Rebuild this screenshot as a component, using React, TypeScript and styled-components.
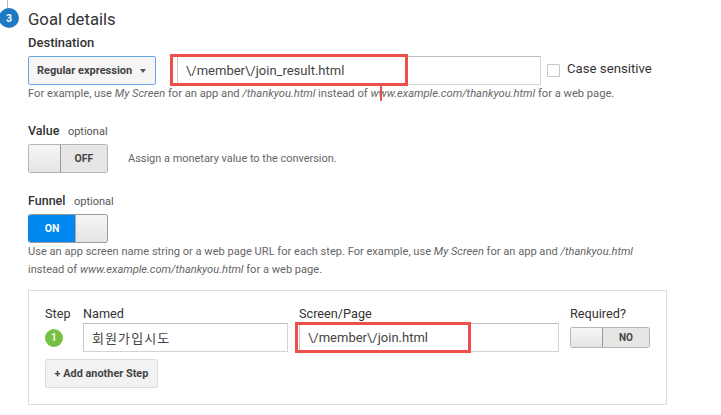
import React from "react";
import styled, { createGlobalStyle } from "styled-components";

const Global = createGlobalStyle`
  html, body { margin: 0; padding: 0; background: #fff; overflow: hidden; }
  body { font-family: Roboto, "Noto Sans CJK KR", sans-serif; color: #333; }
`;

const Page = styled.div`
  position: relative;
  width: 721px;
  height: 415px;
  padding: 9px 0 0 28px;
  box-sizing: border-box;
  overflow: hidden;
`;
const Rail = styled.div`
  position: absolute;
  left: 7px;
  top: 0;
  width: 1px;
  height: 9px;
  background: #bbb;
`;
const Badge = styled.div`
  position: absolute;
  left: -1px;
  top: 8px;
  width: 20px;
  height: 20px;
  border-radius: 50%;
  background: #1f7ac4;
  color: #fff;
  font-size: 10px;
  font-weight: 700;
  display: flex;
  align-items: center;
  justify-content: center;
`;
const Title = styled.h2`
  margin: 0;
  font-size: 16.7px;
  line-height: 21px;
  font-weight: 400;
  color: #333;
`;
const Label = styled.div<{ $mt?: number; $size?: number }>`
  margin-top: ${(p) => p.$mt ?? 0}px;
  height: 16px;
  font-size: ${(p) => p.$size ?? 12.5}px;
  line-height: 16px;
  font-weight: 500;
  color: #333;
  display: flex;
  gap: 8.5px;
  align-items: baseline;
`;
const Optional = styled.span`
  font-size: 11px;
  font-weight: 400;
  color: #555;
`;
const DestRow = styled.div`
  display: flex;
  align-items: center;
  margin-top: 5px;
`;
const Select = styled.div`
  width: 128px;
  height: 29px;
  box-sizing: border-box;
  border: 1px solid #6aa5e8;
  border-radius: 2px;
  background: #f5f5f5;
  display: flex;
  align-items: center;
  padding-left: 8px;
  gap: 8px;
  font-size: 11px;
  font-weight: 700;
  color: #444;
`;
const Caret = styled.span`
  width: 0;
  height: 0;
  border-left: 3.5px solid transparent;
  border-right: 3.5px solid transparent;
  border-top: 4px solid #555;
`;
const Field = styled.div<{ $w: number; $ml?: number }>`
  position: relative;
  box-sizing: border-box;
  width: ${(p) => p.$w}px;
  height: 29px;
  margin-left: ${(p) => p.$ml ?? 0}px;
  border: 1px solid #d4d4d4;
  border-top-color: #bdbdbd;
  border-left-color: #c8c8c8;
  background: #fff;
  padding-left: 8px;
  display: flex;
  align-items: center;
  font-size: 13px;
  color: #444;
`;
const RedBox = styled.div<{ $l: number; $w: number; $t: number; $h: number }>`
  position: absolute;
  left: ${(p) => p.$l}px;
  top: ${(p) => p.$t}px;
  width: ${(p) => p.$w}px;
  height: ${(p) => p.$h}px;
  box-sizing: border-box;
  border: 3px solid #ee4f4b;
  pointer-events: none;
`;
const RedTick = styled.div`
  position: absolute;
  left: 380px;
  top: 86px;
  width: 2px;
  height: 15px;
  background: #e2524e;
`;
const Check = styled.span`
  width: 13px;
  height: 13px;
  box-sizing: border-box;
  margin: 0 7px 0 6px;
  border: 1px solid #c6c6c6;
  border-radius: 1px;
  background: #fff;
`;
const CheckText = styled.span`
  font-size: 13.2px;
  color: #333;
  position: relative;
  top: -2px;
`;
const Hint = styled.p<{ $size?: number }>`
  margin: 0;
  height: auto;
  font-size: ${(p) => p.$size ?? 11}px;
  line-height: 18px;
  color: #666;
  white-space: nowrap;
  em { font-style: italic; }
`;
const ToggleRow = styled.div`
  display: flex;
  align-items: center;
  margin-top: 5px;
  gap: 20px;
`;
const ToggleWrap = styled.div<{ $h: number; $on?: boolean }>`
  display: flex;
  width: 80px;
  height: ${(p) => p.$h}px;
  box-sizing: border-box;
  border: 1px solid ${(p) => (p.$on ? "#9a9a9a" : "#b5b5b5")};
  border-left-color: ${(p) => (p.$on ? "#1a85dd" : "#a9b9c9")};
  border-radius: 3px;
  overflow: hidden;
`;
const Knob = styled.span`
  flex: 0 0 auto;
  width: 32px;
  background: linear-gradient(#f6f6f6, #e4e4e4);
  box-sizing: border-box;
`;
const KnobLeft = styled(Knob)`
  border-right: 1px solid #999;
`;
const KnobRight = styled(Knob)`
  border-left: 1px solid #aaa;
`;
const Track = styled.span<{ $on?: boolean; $size?: number }>`
  flex: 1;
  display: flex;
  align-items: center;
  justify-content: center;
  font-size: ${(p) => p.$size ?? 10.5}px;
  font-weight: 700;
  color: ${(p) => (p.$on ? "#fff" : "#444")};
  background: ${(p) => (p.$on ? "#0088f0" : "#e6e6e6")};
`;
const ToggleNote = styled.span`
  font-size: 10.95px;
  color: #666;
`;
const Panel = styled.div`
  box-sizing: border-box;
  width: 639px;
  height: 115px;
  margin-top: 11px;
  border: 1px solid #ddd;
  padding: 15px 16px 0;
`;
const StepGrid = styled.div`
  display: grid;
  grid-template-columns: 38px 205px 11px 260px 11px 80px;
  grid-template-rows: 16px 29px;
  row-gap: 1px;
  font-size: 12.7px;
  color: #333;
  line-height: 16px;
`;
const Gap = styled.span``;
const StepDot = styled.div`
  width: 18px;
  height: 18px;
  border-radius: 50%;
  background: #77c043;
  color: #fff;
  font-size: 11px;
  font-weight: 500;
  display: flex;
  align-items: center;
  justify-content: center;
  align-self: center;
`;
const ToggleCell = styled.div`
  align-self: center;
`;
const KoreanText = styled.span`
  font-family: "Noto Sans CJK KR", sans-serif;
  font-size: 13px;
  font-weight: 400;
  letter-spacing: 1.1px;
  color: #444;
`;
const AddButton = styled.div`
  box-sizing: border-box;
  width: 113px;
  height: 29px;
  margin-top: 7px;
  border: 1px solid #ddd;
  border-radius: 2px;
  background: #f2f2f2;
  display: flex;
  align-items: center;
  justify-content: center;
  font-size: 10.9px;
  font-weight: 700;
  color: #444;
`;

export default function App() {
  return (
    <Page>
      <Global />
      <Rail />
      <Badge>3</Badge>
      <Title>Goal details</Title>
      <Label $mt={5} $size={13}>Destination</Label>
      <DestRow>
        <Select>
          Regular expression
          <Caret />
        </Select>
        <Field $w={364} $ml={21}>
          \/member\/join_result.html
          <RedBox $l={-8} $w={238} $t={-3} $h={32} />
        </Field>
        <Check />
        <CheckText>Case sensitive</CheckText>
      </DestRow>
      <RedTick />
      <Hint $size={11.17}>
        For example, use <em>My Screen</em> for an app and <em>/thankyou.html</em> instead of{" "}
        <em>www.example.com/thankyou.html</em> for a web page.
      </Hint>
      <Label $mt={20}>
        Value <Optional>optional</Optional>
      </Label>
      <ToggleRow>
        <ToggleWrap $h={29}>
          <KnobLeft />
          <Track>OFF</Track>
        </ToggleWrap>
        <ToggleNote>Assign a monetary value to the conversion.</ToggleNote>
      </ToggleRow>
      <Label $mt={20}>
        Funnel <Optional>optional</Optional>
      </Label>
      <ToggleRow>
        <ToggleWrap $h={29} $on>
          <Track $on>ON</Track>
          <KnobRight />
        </ToggleWrap>
      </ToggleRow>
      <Hint $size={11.09}>
        Use an app screen name string or a web page URL for each step. For example, use <em>My Screen</em> for an app and{" "}
        <em>/thankyou.html</em>
        <br />
        instead of <em>www.example.com/thankyou.html</em> for a web page.
      </Hint>
      <Panel>
        <StepGrid>
          <span>Step</span>
          <span>Named</span>
          <Gap />
          <span>Screen/Page</span>
          <Gap />
          <span>Required?</span>
          <StepDot>1</StepDot>
          <Field $w={205}>
            <KoreanText>회원가입시도</KoreanText>
          </Field>
          <Gap />
          <Field $w={260}>
            \/member\/join.html
            <RedBox $l={-5} $w={176} $t={-2} $h={31} />
          </Field>
          <Gap />
          <ToggleCell>
            <ToggleWrap $h={21}>
              <KnobLeft />
              <Track $size={10}>NO</Track>
            </ToggleWrap>
          </ToggleCell>
        </StepGrid>
        <AddButton>+ Add another Step</AddButton>
      </Panel>
    </Page>
  );
}
